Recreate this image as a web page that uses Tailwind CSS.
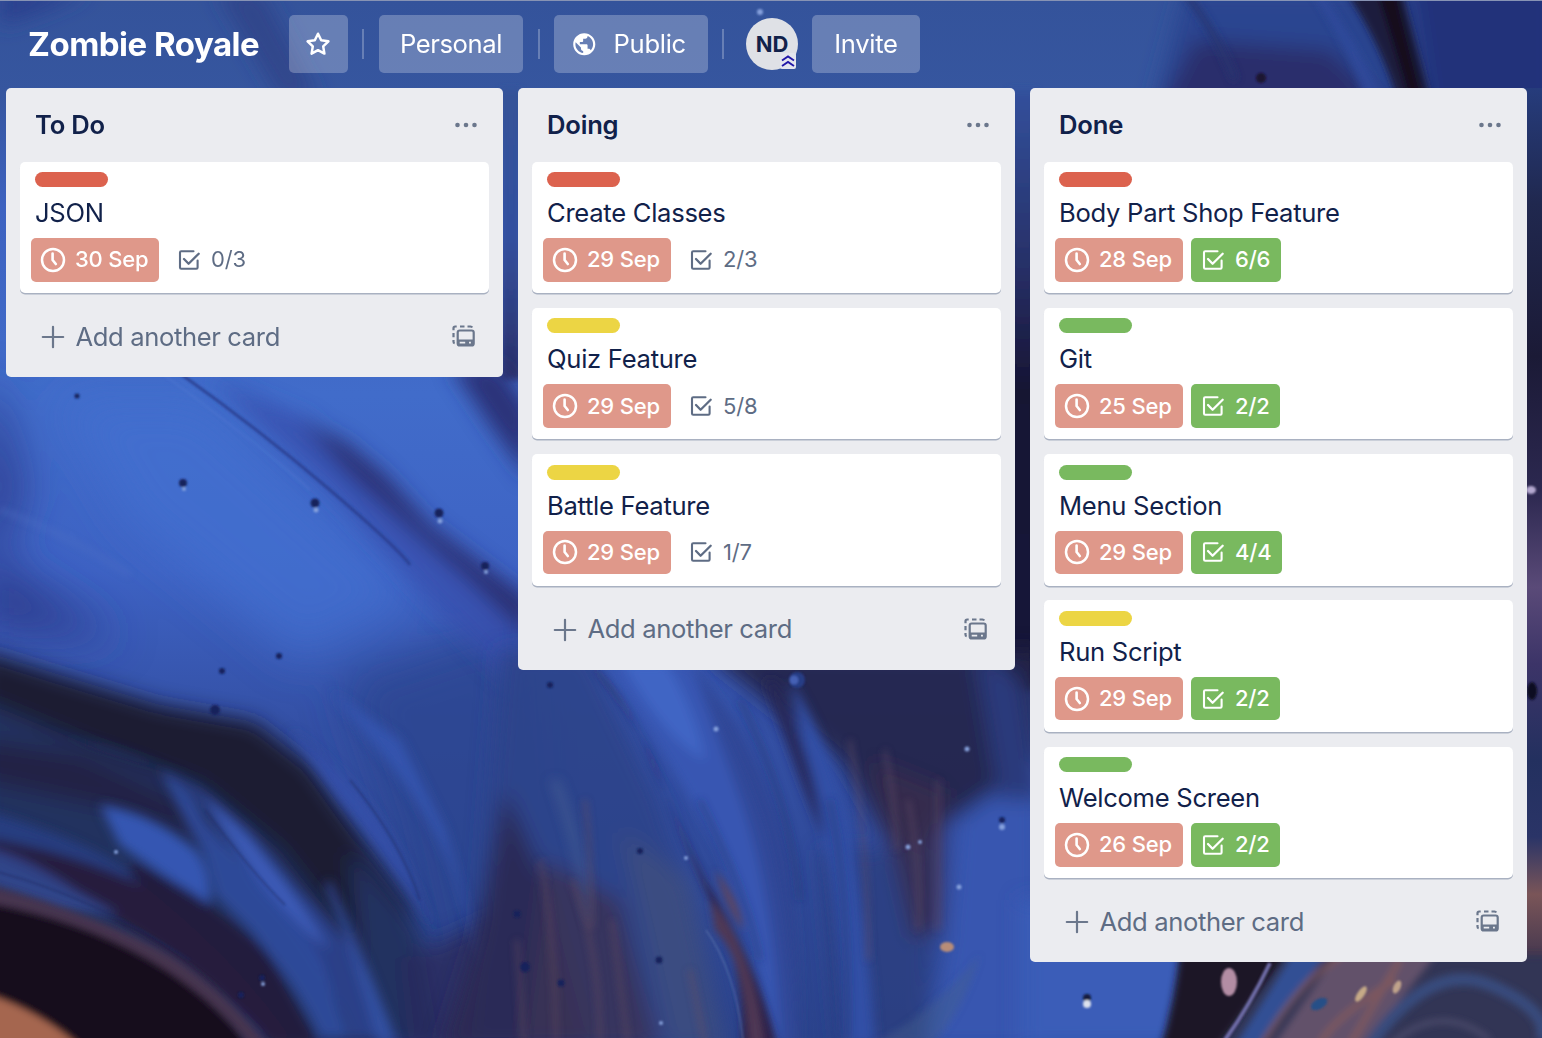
<!DOCTYPE html>
<html lang="en">
<head>
<meta charset="utf-8">
<title>Zombie Royale</title>
<script src="https://cdn.jsdelivr.net/npm/@tailwindcss/browser@4"></script>
</head>
<body class="relative h-[1038px] w-[1542px] overflow-hidden bg-[#34549c] font-['Inter',sans-serif] text-[#11214a]">

<!-- Icons -->
<svg class="hidden">
  <symbol id="clock" viewBox="0 0 26 26"><circle cx="13" cy="13" r="11" fill="none" stroke="currentColor" stroke-width="2.5"/><path d="M12.600 6.500v6.500l3.200 4" fill="none" stroke="currentColor" stroke-width="2.6" stroke-linecap="round" stroke-linejoin="round"/></symbol>
  <symbol id="check" viewBox="0 0 24 24"><path d="M16.5 3.2H4.2a1.2 1.2 0 0 0-1.2 1.2v15.2a1.2 1.2 0 0 0 1.200 1.200h15.200a1.200 1.200 0 0 0 1.200-1.200V12.500" fill="none" stroke="currentColor" stroke-width="2.100" stroke-linecap="round"/><path d="M7 11l4.600 4.700L21.700 5.700" fill="none" stroke="currentColor" stroke-width="2.300" stroke-linecap="round" stroke-linejoin="round"/></symbol>
  <symbol id="plus" viewBox="0 0 24 24"><path d="M12 1.800v20.400M1.800 12h20.400" stroke="currentColor" stroke-width="2.200" stroke-linecap="round"/></symbol>
  <symbol id="template" viewBox="0 0 24 24"><path d="M1.500 5.200V3.200q0-1.700 1.700-1.700h1.500M8 1.500h4.500M15.500 1.500h3q1.200 0 1.700 1M1.500 8v4.200M1.500 15v1.800q0 1.200 1.200 1.500" fill="none" stroke="currentColor" stroke-width="2.200"/><rect x="5.700" y="5.500" width="16" height="15" rx="2" fill="none" stroke="currentColor" stroke-width="2.200"/><path fill-rule="evenodd" d="M5.700 14.500h16v6.200h-16zM7.700 16.700v1.900h5.500v-1.900zM17 16.700v1.900h1.900v-1.900z" fill="currentColor"/></symbol>
  <symbol id="dots" viewBox="0 0 24 6"><circle cx="3.500" cy="3" r="2.300" fill="currentColor"/><circle cx="12" cy="3" r="2.300" fill="currentColor"/><circle cx="20.500" cy="3" r="2.300" fill="currentColor"/></symbol>
</svg>

<!-- Poured-paint wallpaper -->
<svg class="absolute inset-0 h-full w-full" viewBox="0 0 1542 1038" preserveAspectRatio="none">
  <defs>
    <linearGradient id="sky" x1="0" y1="0" x2="0" y2="1"><stop offset="0" stop-color="#34539b"/><stop offset=".09" stop-color="#36569f"/><stop offset=".2" stop-color="#3d62c0"/><stop offset=".38" stop-color="#416cca"/><stop offset=".55" stop-color="#3e63c4"/><stop offset=".7" stop-color="#3450a5"/><stop offset="1" stop-color="#2b438c"/></linearGradient>
    <linearGradient id="gapA" x1="0" y1="0" x2="0" y2="1"><stop offset="0" stop-color="#345298"/><stop offset=".5" stop-color="#33509f"/><stop offset="1" stop-color="#2a2f68"/></linearGradient>
    <linearGradient id="gapB" x1="0" y1="0" x2="0" y2="1"><stop offset="0" stop-color="#32509c"/><stop offset=".3" stop-color="#272f66"/><stop offset=".5" stop-color="#161433"/><stop offset="1" stop-color="#18183a"/></linearGradient>
    <linearGradient id="edge" x1="0" y1="0" x2="0" y2="1"><stop offset="0" stop-color="#263c7c"/><stop offset=".12" stop-color="#20284f"/><stop offset=".28" stop-color="#1b1a36"/><stop offset=".42" stop-color="#2c2850"/><stop offset=".52" stop-color="#5a4a78"/><stop offset=".6" stop-color="#3c3468"/><stop offset=".7" stop-color="#23305f"/><stop offset=".78" stop-color="#2a3467"/><stop offset=".84" stop-color="#7a5558"/><stop offset=".9" stop-color="#4a3a50"/><stop offset="1" stop-color="#242b55"/></linearGradient>
    <filter id="b1" x="-20%" y="-20%" width="140%" height="140%"><feGaussianBlur stdDeviation="1"/></filter>
    <filter id="b3" x="-20%" y="-20%" width="140%" height="140%"><feGaussianBlur stdDeviation="3.500"/></filter>
    <filter id="b5" x="-20%" y="-20%" width="140%" height="140%"><feGaussianBlur stdDeviation="5.500"/></filter>
    <filter id="b8" x="-30%" y="-30%" width="160%" height="160%"><feGaussianBlur stdDeviation="10"/></filter>
    <filter id="b20" x="-50%" y="-50%" width="200%" height="200%"><feGaussianBlur stdDeviation="22"/></filter>
  </defs>
  <rect width="1542" height="1038" fill="url(#sky)"/>
  <!-- header strip -->
  <g filter="url(#b8)">
    <path d="M215 -10L262 -10L320 100L280 100Z" fill="#2c3a80" opacity=".6"/>
    <path d="M1185 -10H1560V120H1150Z" fill="#2b4490"/>
    <path d="M1195 40L1330 50L1390 110H1160Z" fill="#2a2f6c"/>
    <path d="M1410 -20H1560V120H1430Z" fill="#22327a"/>
    <path d="M0 -10H90Q50 10 0 25Z" fill="#2a408e"/>
  </g>
  <g filter="url(#b3)">
    <path d="M1345 -10H1402Q1415 40 1434 110H1400Q1385 50 1345 -10Z" fill="#1d1a3c"/>
    <path d="M1376 -10H1396Q1408 40 1426 110H1412Q1392 40 1376 -10Z" fill="#15101f"/>
    <path d="M1320 -10Q1355 40 1385 100H1365Q1350 50 1310 -10Z" fill="#2e4a9c" opacity=".8"/>
    <path d="M1183 -10Q1215 30 1235 80" fill="none" stroke="#27346f" stroke-width="7" opacity=".8"/>
  </g>
  <!-- gaps between columns -->
  <rect x="500" y="90" width="22" height="290" fill="url(#gapA)" filter="url(#b3)"/>
  <rect x="1008" y="90" width="30" height="600" fill="url(#gapB)" filter="url(#b3)"/>
  <rect x="1518" y="88" width="34" height="960" fill="url(#edge)"/>
  <!-- left field -->
  <g filter="url(#b20)">
    <path d="M-20 380L0 400L25 490L0 560L120 640L-20 630Z" fill="#2e3c8c" opacity=".9"/>
    <path d="M60 400L200 400L420 600L300 660L130 520Z" fill="#446fd0" opacity=".7"/>
    <path d="M340 680L520 620L540 1038L440 1038L390 820Z" fill="#2d448f" opacity=".8"/>
  </g>
  <g filter="url(#b8)">
    <path d="M210 378L310 420L380 490L517 620V690L420 590L330 490Z" fill="#384fae" opacity=".8"/>
    <path d="M300 420L345 442L385 475L430 525L530 600V640L470 582L400 520L350 475Z" fill="#292f70"/>
    <path d="M450 365L500 365L530 410V480L490 425Z" fill="#2a3378"/>
  </g>
  <path d="M178 372Q260 430 330 490T410 565" fill="none" stroke="#2b3f90" stroke-width="3" filter="url(#b1)" opacity=".85"/>
  <path d="M160 372Q260 445 310 490" fill="none" stroke="#5279d2" stroke-width="3" filter="url(#b1)" opacity=".3"/>
  <path d="M0 510Q60 530 130 575" fill="none" stroke="#5070c4" stroke-width="5" filter="url(#b3)" opacity=".5"/>
  <!-- lower left waves -->
  <g filter="url(#b8)">
    <path d="M-20 700L100 745L210 790L300 860L400 960L430 1050H-20Z" fill="#23305f"/>
    <path d="M-20 650L60 675L160 705L255 722L310 765L360 835L410 905L440 1050H385L350 940L280 850L200 785L100 750L-20 700Z" fill="#1e1a33"/>
    <path d="M-20 740L80 755L180 800L230 850L120 810L-20 780Z" fill="#231f3d" opacity=".8"/>
    <path d="M350 850L420 930L440 1050H370Z" fill="#223060"/>
    <path d="M400 960L530 900V1050H410Z" fill="#2a2a5c" opacity=".8"/>
  </g>
  <g filter="url(#b5)">
    <path d="M30 728Q100 745 160 768Q195 785 220 830L260 890Q320 950 352 1038H395Q370 960 300 890L250 830L215 800Q170 765 100 745Z" fill="#2d479a" opacity=".7"/>
    <path d="M160 770Q190 785 205 820L240 860Q290 910 320 960L350 1038H320Q300 990 250 930L215 895Q208 855 190 830Z" fill="#3352ab" opacity=".75"/>
    <path d="M100 805Q150 812 195 850Q212 870 210 905L240 925Q170 880 120 845Z" fill="#3656b2"/>
    <path d="M205 800Q240 825 262 855Q300 900 330 950L310 935Q255 880 205 800Z" fill="#3c5cb8"/>
    <path d="M-10 812Q80 838 130 872L240 950L300 1038H260Q200 970 120 905L-10 850Z" fill="#283c80"/>
    <path d="M-10 838Q100 858 180 905Q260 960 300 1045L270 1045Q180 940 -10 855Z" fill="#271f3c"/>
    <path d="M130 860Q210 895 270 955L320 1045H295Q240 960 130 875Z" fill="#221d3c"/>
    <path d="M-10 848Q30 858 75 890L120 915L60 910L-10 885Z" fill="#364a94" opacity=".8"/>
    <path d="M290 730Q390 800 430 925L442 950Q415 890 340 800Z" fill="#3450a8"/>
    <path d="M330 690L400 740L445 830L480 950L484 970L462 900Q440 820 370 740Z" fill="#3454b0" opacity=".9"/>
    <path d="M330 880Q362 950 398 1045H378Q355 960 325 885Z" fill="#3453a8" opacity=".8"/>
  </g>
  <path d="M205 810Q250 870 285 905M350 780Q400 840 420 900M-10 870Q90 895 190 960" fill="none" stroke="#1f2b62" stroke-width="2" filter="url(#b1)" opacity=".45"/>
  <g filter="url(#b3)">
    <path d="M-10 895Q110 925 175 975Q230 1015 250 1050H-10Z" fill="#18101f"/>
    <path d="M-10 885Q100 915 170 955Q225 990 268 1045H250Q210 995 150 960Q80 920 -10 903Z" fill="#473450"/>
    <path d="M-10 995Q40 1012 78 1045H-10Z" fill="#a5664f"/>
  </g>
  <!-- middle -->
  <g filter="url(#b8)">
    <path d="M500 650H590L660 800L700 930L730 1050H470Z" fill="#2d4389" opacity=".9"/>
    <path d="M505 790L545 880L590 1050H440L475 940Z" fill="#2c2752" opacity=".9"/>
    <path d="M545 860L620 900L660 1050H520Z" fill="#3a3257" opacity=".85"/>
    <path d="M620 830L690 880L725 1050H670Z" fill="#41517e" opacity=".7"/>
    <path d="M700 650H1040V820L950 820L900 860L840 760Z" fill="#252448" opacity=".9"/>
    <path d="M820 850H930V1050H840Z" fill="#2d4080" opacity=".8"/>
    <path d="M870 760L945 790L942 930L912 940Z" fill="#382c4c" opacity=".8"/>
    <path d="M955 820L1040 760V1050H925L945 940Z" fill="#3856b0"/>
    <path d="M975 650L1020 680L1040 800L1000 800Z" fill="#2a3a7c"/>
  </g>
  <g filter="url(#b5)">
    <path d="M605 665H690Q735 740 765 830Q790 930 795 1045H775Q750 930 720 850Q670 760 605 665Z" fill="#3956b2"/>
    <path d="M620 660H665Q695 710 705 760Q665 740 620 660Z" fill="#4169c8" opacity=".8"/>
    <path d="M690 660Q765 750 790 860Q800 960 800 1045H780Q775 900 740 800Z" fill="#2e4490" opacity=".7"/>
    <path d="M790 680Q840 760 855 860T875 1045H845Q840 900 815 800Z" fill="#334fa6"/>
    <path d="M775 680Q815 760 825 840Q798 780 765 680Z" fill="#252856"/>
    <path d="M560 780Q590 860 590 930L582 900Q575 850 550 780Z" fill="#496294" opacity=".5"/>
  </g>
  <g filter="url(#b3)">
    <path d="M590 665Q620 690 645 745Q675 820 705 880Q755 960 777 1045H742Q745 960 710 900Q675 820 660 780Q640 720 590 665Z" fill="#2d2348"/>
    <path d="M710 900Q750 940 764 1045H750Q745 960 715 930Z" fill="#503854"/>
    <path d="M715 870Q740 900 743 930Q727 910 715 870Z" fill="#5d4460"/>
    <path d="M540 860Q555 930 556 1045M572 880Q600 950 600 1045M612 920L628 1045M517 940L524 1045M585 800Q592 860 592 930M690 970L705 1045" fill="none" stroke="#63495f" stroke-width="5" opacity=".45"/>
    <path d="M850 740Q870 860 868 960M885 750Q895 800 897 850M908 800Q920 860 918 930M938 780V930" fill="none" stroke="#65506a" stroke-width="4" opacity=".5"/>
    <path d="M740 700Q790 800 800 900M830 800Q850 900 848 1040M700 800Q750 900 760 960" fill="none" stroke="#24306c" stroke-width="5" opacity=".45"/>
    <path d="M870 1045Q925 1020 980 955Q960 1020 930 1045Z" fill="#47618b" opacity=".4"/>
  </g>
  <path d="M706 930Q735 970 743 1040" fill="none" stroke="#6d82b5" stroke-width="1.500" filter="url(#b1)" opacity=".5"/>
  <!-- lower right -->
  <path d="M1020 900H1200V1050H1020Z" fill="#3b5db8" filter="url(#b8)"/>
  <path d="M1225 955H1560V1050H1200Z" fill="#303555" filter="url(#b3)"/>
  <g filter="url(#b3)">
    <path d="M1180 950H1290L1215 1050H1160Q1175 1000 1180 950Z" fill="#1c1428"/>
    <path d="M1295 950H1330L1255 1050H1232Z" fill="#315094"/>
    <path d="M1340 950H1440L1360 1050H1270Z" fill="#62516a"/>
    <path d="M1342 955Q1300 980 1262 1045M1395 980Q1330 1020 1320 1045M1400 960Q1370 1010 1350 1045" fill="none" stroke="#935d55" stroke-width="6" opacity=".6"/>
    <path d="M1370 1045Q1430 960 1490 985T1542 1040" fill="none" stroke="#394b7d" stroke-width="12"/>
    <path d="M1390 1045Q1440 1000 1490 1040" fill="none" stroke="#51506f" stroke-width="4"/>
  </g>
  <g filter="url(#b1)">
    <path d="M1270 963Q1250 1005 1225 1040" fill="none" stroke="#6f6da8" stroke-width="4"/>
    <ellipse cx="1229" cy="982" rx="8" ry="14" fill="#b38da4"/>
    <ellipse cx="1319" cy="1004" rx="9" ry="5" fill="#284f87" transform="rotate(-30 1319 1004)"/>
    <ellipse cx="1361" cy="994" rx="3.500" ry="9" fill="#c6aa87" transform="rotate(35 1361 994)"/>
    <ellipse cx="1397" cy="987" rx="3.500" ry="7" fill="#c0a38b" transform="rotate(25 1397 987)"/>
    <ellipse cx="947" cy="947" rx="7" ry="5" fill="#b88d78"/>
    <circle cx="1087" cy="998" r="4" fill="#131b3e"/><circle cx="1087" cy="1004" r="4" fill="#dce2ee"/>
    <circle cx="797" cy="680" r="8" fill="#283c85"/><circle cx="794" cy="680" r="4.500" fill="#4560b4"/>
    <ellipse cx="1531" cy="490" rx="5" ry="4" fill="#b5a9d0"/>
    <ellipse cx="1532" cy="691" rx="5" ry="9" fill="#0c0c22"/>
    <circle cx="1261" cy="78" r="5" fill="#1d1330"/>
    <g fill="#18245c"><circle cx="183" cy="483" r="4"/><circle cx="315" cy="503" r="4.500"/><circle cx="439" cy="513" r="4.500"/><circle cx="485" cy="566" r="4"/><circle cx="279" cy="656" r="3"/><circle cx="222" cy="671" r="3"/><circle cx="215" cy="710" r="5"/><circle cx="77" cy="396" r="2.500"/><circle cx="550" cy="685" r="3"/><circle cx="640" cy="851" r="3"/><circle cx="659" cy="960" r="3.500"/><circle cx="561" cy="983" r="3.500"/><circle cx="517" cy="914" r="3.500"/><circle cx="525" cy="967" r="5"/><circle cx="262" cy="978" r="3"/><circle cx="241" cy="995" r="3"/><circle cx="1002" cy="820" r="3"/></g>
    <g fill="#86a1dc"><circle cx="184" cy="489" r="2"/><circle cx="316" cy="510" r="2.500"/><circle cx="440" cy="521" r="2.500"/><circle cx="486" cy="572" r="2"/><circle cx="716" cy="729" r="2.500"/><circle cx="1002" cy="827" r="3"/><circle cx="959" cy="887" r="2.500"/><circle cx="920" cy="842" r="2"/><circle cx="908" cy="847" r="2.500"/><circle cx="967" cy="749" r="2.500"/><circle cx="686" cy="858" r="2"/><circle cx="116" cy="852" r="2"/><circle cx="263" cy="984" r="2"/><circle cx="661" cy="1023" r="2"/><circle cx="760" cy="12" r="3"/></g>
  </g>
  <rect width="1542" height="1" fill="#8793b4"/>
</svg>

<div class="relative flex h-full flex-col">
  <header class="flex h-[88px] shrink-0 items-center pl-7 text-white">
    <h1 class="w-[261px] text-[33px] leading-[56px] font-bold tracking-[-0.500px] whitespace-nowrap">Zombie Royale</h1>
    <button class="flex h-[58px] w-[59px] items-center justify-center rounded-[5px] bg-white/25">
      <svg class="mr-[2px] size-7" viewBox="0 0 28 28"><path d="M14 3.700l3.200 6.600 7.200 1-5.200 5.100 1.200 7.200L14 20.200l-6.400 3.400 1.200-7.200-5.200-5.100 7.200-1z" fill="none" stroke="currentColor" stroke-width="2.500" stroke-linejoin="round"/></svg>
    </button>
    <span class="ml-[14px] h-[30px] w-[2px] bg-white/25"></span>
    <button class="ml-[15px] h-[58px] w-[144px] rounded-[5px] bg-white/25 text-[25.600px] tracking-[-0.400px]">Personal</button>
    <span class="ml-[14.500px] h-[30px] w-[2px] bg-white/25"></span>
    <button class="ml-[14.500px] flex h-[58px] w-[154px] items-center rounded-[5px] bg-white/25 pl-[17px] text-[25.600px] tracking-[-0.300px]">
      <svg class="mr-[16px] size-[26.500px]" viewBox="0 0 24 24" fill="currentColor"><path d="M12 2C6.480 2 2 6.480 2 12s4.480 10 10 10 10-4.480 10-10S17.520 2 12 2zm-1 17.930c-3.950-.490-7-3.850-7-7.930 0-.620.080-1.210.210-1.790L9 15v1c0 1.100.900 2 2 2v1.930zm6.900-2.540c-.260-.810-1-1.390-1.900-1.390h-1v-3c0-.550-.450-1-1-1H8v-2h2c.550 0 1-.450 1-1V7h2c1.100 0 2-.900 2-2v-.410c2.930 1.190 5 4.060 5 7.410 0 2.080-.800 3.970-2.100 5.390z"/></svg>Public
    </button>
    <span class="ml-[14px] h-[30px] w-[2px] bg-white/25"></span>
    <div class="relative ml-[22px] flex size-[52px] items-center justify-center rounded-full bg-[#dfe1e6] text-[22px] font-bold text-[#11214a]">ND
      <svg class="absolute right-[2px] bottom-[1px] size-4" viewBox="0 0 16 16"><rect width="16" height="16" rx="2" fill="#e4e6ee"/><path d="M2 7.500L8 3.500 14 7.500M2 13L8 9 14 13" fill="none" stroke="#2218a8" stroke-width="1.900"/></svg>
    </div>
    <button class="ml-[14px] h-[58px] w-[108px] rounded-[5px] bg-white/25 text-[25.600px] tracking-[-0.300px]">Invite</button>
  </header>
  <main id="board" class="flex items-start gap-[14.500px] pl-[5.500px]"></main>
</div>

<script>
const lists = [
  { name: 'To Do', cards: [['red', 'JSON', '30 Sep', '0/3']] },
  { name: 'Doing', cards: [
    ['red', 'Create Classes', '29 Sep', '2/3'],
    ['yellow', 'Quiz Feature', '29 Sep', '5/8'],
    ['yellow', 'Battle Feature', '29 Sep', '1/7']] },
  { name: 'Done', cards: [
    ['red', 'Body Part Shop Feature', '28 Sep', '6/6'],
    ['green', 'Git', '25 Sep', '2/2'],
    ['green', 'Menu Section', '29 Sep', '4/4'],
    ['yellow', 'Run Script', '29 Sep', '2/2'],
    ['green', 'Welcome Screen', '26 Sep', '2/2']] }
];
const labels = { red: 'bg-[#dc624e]', yellow: 'bg-[#ecd544]', green: 'bg-[#79b95f]' };
const card = ([label, title, due, progress]) => {
  const [a, b] = progress.split('/');
  const tone = a === b ? 'bg-[#79b95f] text-white font-medium' : 'text-[#5e6c84]';
  return `
  <article class="h-[131.500px] rounded-[5px] bg-white px-[11px] pt-[10.500px] shadow-[0_1.500px_0_#a9b1c1]">
    <div class="ml-[4px] h-[15px] w-[73px] rounded-[7.500px] ${labels[label]}"></div>
    <h3 class="ml-[4px] mt-[10px] mb-[9px] h-[32px] text-[25.600px] leading-[32px] tracking-[-0.280px] whitespace-nowrap">${title}</h3>
    <div class="flex gap-[8px] text-[22px] leading-[45px] tracking-[-0.200px] whitespace-nowrap">
      <span class="flex h-[43.500px] w-[128px] items-center rounded-[5px] bg-[#df988a] pl-[9px] text-white font-medium"><svg class="mr-[9px] size-[26px]"><use href="#clock"/></svg>${due}</span>
      <span class="flex h-[43.500px] items-center rounded-[5px] pr-[10.500px] pl-[10px] ${tone}"><svg class="mr-[10px] size-6"><use href="#check"/></svg>${progress}</span>
    </div>
  </article>`;
};
document.getElementById('board').innerHTML = lists.map(l => `
  <section class="w-[497.500px] rounded-[5px] bg-[#ebecf0] px-[14.500px]">
    <div class="flex h-[73.500px] items-center justify-between pr-[10.500px] pl-[15px]">
      <h2 class="text-[25.600px] font-semibold tracking-[-0.200px]">${l.name}</h2>
      <svg class="h-[6px] w-6 text-[#6b778c]"><use href="#dots"/></svg>
    </div>
    <div class="flex flex-col gap-[14.800px]">${l.cards.map(card).join('')}</div>
    <div class="flex h-[84px] items-center pt-[4px] pr-[13px] pl-[21px] text-[25.600px] tracking-[-0.370px] text-[#5e6c84]">
      <svg class="mr-[10.500px] size-6 text-[#6b778c]"><use href="#plus"/></svg>
      <span class="grow whitespace-nowrap">Add another card</span>
      <svg class="size-6 text-[#6b778c]"><use href="#template"/></svg>
    </div>
  </section>`).join('');
</script>
</body>
</html>
